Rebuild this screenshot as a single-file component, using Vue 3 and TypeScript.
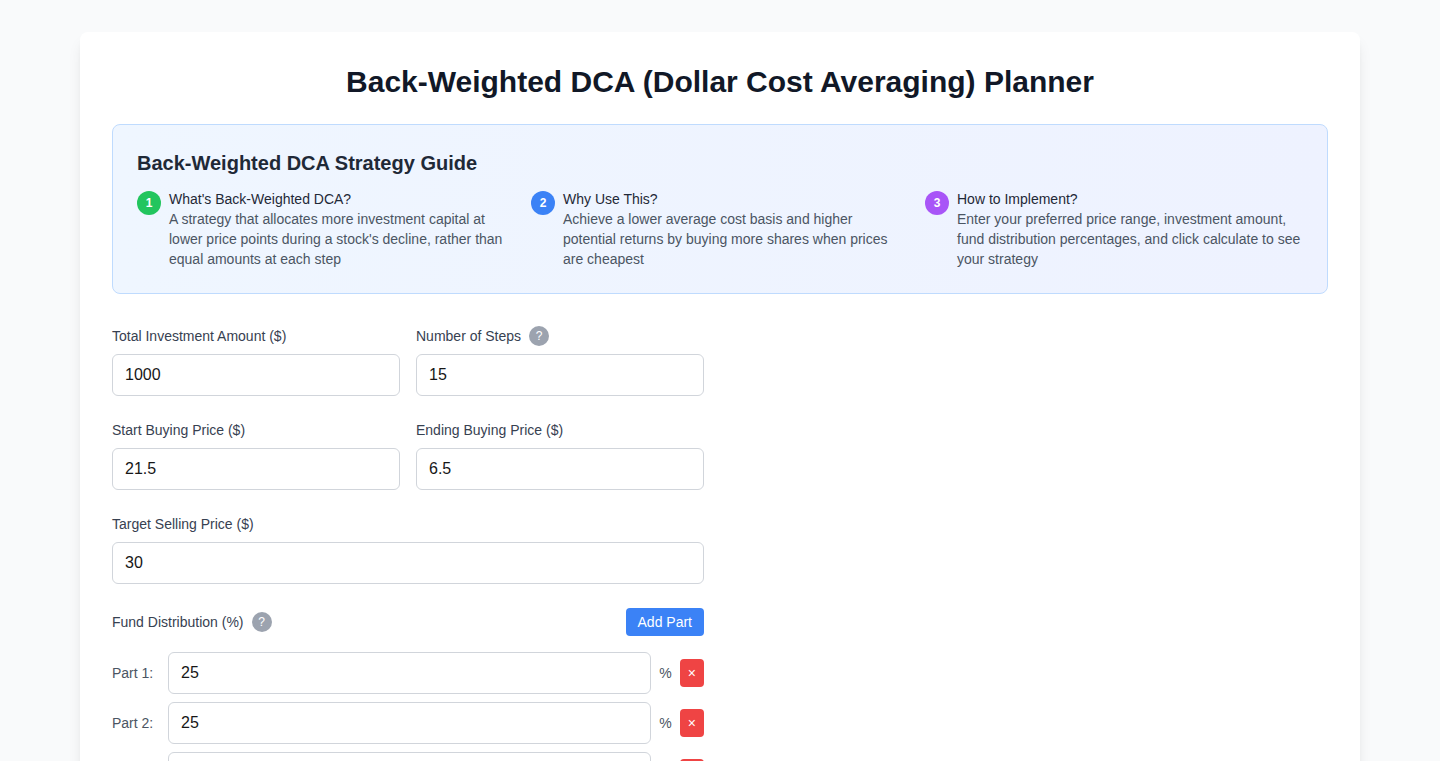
<script setup lang="ts">
import { ref } from 'vue'

interface GuideStep {
  title: string
  text: string
  tone: string
}

const guide: GuideStep[] = [
  {
    title: "What's Back-Weighted DCA?",
    text: "A strategy that allocates more investment capital at lower price points during a stock's decline, rather than equal amounts at each step",
    tone: 'green',
  },
  {
    title: 'Why Use This?',
    text: 'Achieve a lower average cost basis and higher potential returns by buying more shares when prices are cheapest',
    tone: 'blue',
  },
  {
    title: 'How to Implement?',
    text: 'Enter your preferred price range, investment amount, fund distribution percentages, and click calculate to see your strategy',
    tone: 'purple',
  },
]

const total = ref(1000)
const steps = ref(15)
const startPrice = ref(21.5)
const endPrice = ref(6.5)
const target = ref(30)
const parts = ref<number[]>([25, 25, 25, 25])

function addPart(): void {
  parts.value.push(0)
}

function removePart(index: number): void {
  parts.value.splice(index, 1)
}
</script>

<template>
  <div class="page">
    <main class="card">
      <h1>Back-Weighted DCA (Dollar Cost Averaging) Planner</h1>

      <section class="guide">
        <h2>Back-Weighted DCA Strategy Guide</h2>
        <div class="guide-grid">
          <div v-for="(item, i) in guide" :key="item.title" class="guide-item">
            <span class="badge" :class="item.tone">{{ i + 1 }}</span>
            <div>
              <h3>{{ item.title }}</h3>
              <p>{{ item.text }}</p>
            </div>
          </div>
        </div>
      </section>

      <div class="columns">
        <form class="form" @submit.prevent>
          <div class="pair">
            <div>
              <div class="label-row"><label for="total">Total Investment Amount ($)</label></div>
              <input id="total" v-model="total" type="number" />
            </div>
            <div>
              <div class="label-row">
                <label for="steps">Number of Steps</label>
                <button type="button" class="help" aria-label="About number of steps">?</button>
              </div>
              <input id="steps" v-model="steps" type="number" />
            </div>
          </div>

          <div class="pair">
            <div>
              <div class="label-row"><label for="start">Start Buying Price ($)</label></div>
              <input id="start" v-model="startPrice" type="number" step="any" />
            </div>
            <div>
              <div class="label-row"><label for="end">Ending Buying Price ($)</label></div>
              <input id="end" v-model="endPrice" type="number" step="any" />
            </div>
          </div>

          <div>
            <div class="label-row"><label for="target">Target Selling Price ($)</label></div>
            <input id="target" v-model="target" type="number" />
          </div>

          <fieldset aria-labelledby="distribution">
            <div class="dist-head">
              <div class="dist-title">
                <span id="distribution">Fund Distribution (%)</span>
                <button type="button" class="help" aria-label="About fund distribution">?</button>
              </div>
              <button type="button" class="add" @click="addPart">Add Part</button>
            </div>
            <div class="parts">
              <div v-for="(_, i) in parts" :key="i" class="part">
                <label :for="`part-${i}`">Part {{ i + 1 }}:</label>
                <input :id="`part-${i}`" v-model="parts[i]" type="number" />
                <span>%</span>
                <button type="button" class="remove" :aria-label="`Remove part ${i + 1}`" @click="removePart(i)">×</button>
              </div>
            </div>
          </fieldset>
        </form>
      </div>
    </main>
  </div>
</template>

<style>
body {
  background: #f9fafb;
}
html {
  scrollbar-width: none;
}
</style>

<style scoped>
* {
  box-sizing: border-box;
}
.page {
  min-height: 100vh;
  padding: 32px 16px;
  background: #f9fafb;
  color: #111827;
  font-family: "Liberation Sans", Arial, sans-serif;
  font-size: 14px;
  line-height: 20px;
}
.card {
  max-width: 1280px;
  margin: 0 auto;
  padding: 32px;
  background: #fff;
  border-radius: 8px;
  box-shadow: 0 10px 15px -3px rgb(0 0 0 / 0.1), 0 4px 6px -4px rgb(0 0 0 / 0.1);
}
h1,
h2,
h3,
p {
  margin: 0;
}
h1 {
  margin-bottom: 24px;
  font-size: 30px;
  line-height: 36px;
  text-align: center;
}
.guide {
  margin-bottom: 32px;
  padding: 24px;
  border: 1px solid #bfdbfe;
  border-radius: 8px;
  background: linear-gradient(to right, #eff6ff, #eef2ff);
}
h2 {
  margin-bottom: 12px;
  color: #1f2937;
  font-size: 20px;
  line-height: 28px;
}
.guide-grid {
  display: grid;
  grid-template-columns: repeat(3, 1fr);
  gap: 16px;
}
.guide-item {
  display: flex;
  align-items: flex-start;
  gap: 8px;
}
.badge {
  display: flex;
  flex: none;
  align-items: center;
  justify-content: center;
  width: 24px;
  height: 24px;
  margin-top: 2px;
  border-radius: 50%;
  color: #fff;
  font-size: 12px;
  font-weight: 700;
}
.green {
  background: #22c55e;
}
.blue {
  background: #3b82f6;
}
.purple {
  background: #a855f7;
}
h3 {
  color: #1f2937;
  font-size: 14px;
  font-weight: 400;
}
p {
  color: #4b5563;
}
.columns {
  display: grid;
  grid-template-columns: 1fr 1fr;
  gap: 32px;
}
.form {
  display: grid;
  gap: 24px;
}
.pair {
  display: grid;
  grid-template-columns: 1fr 1fr;
  gap: 16px;
}
.label-row,
.dist-title {
  display: flex;
  align-items: center;
  gap: 8px;
  color: #374151;
}
.label-row {
  margin-bottom: 8px;
}
input {
  display: block;
  width: 100%;
  min-width: 0;
  height: 42px;
  padding: 8px 12px;
  border: 1px solid #d1d5db;
  border-radius: 6px;
  background: #fff;
  color: #171717;
  font: 16px/24px "Liberation Sans", Arial, sans-serif;
}
button {
  padding: 0;
  border: 0;
  font-family: inherit;
  cursor: pointer;
}
.help {
  width: 20px;
  height: 20px;
  border-radius: 50%;
  background: #9ca3af;
  color: #fff;
  font-size: 12px;
  line-height: 16px;
}
fieldset {
  min-width: 0;
  margin: 0;
  padding: 0;
  border: 0;
}
.dist-head {
  display: flex;
  align-items: center;
  justify-content: space-between;
  margin-bottom: 16px;
}
.add {
  padding: 4px 12px;
  border-radius: 4px;
  background: #3b82f6;
  color: #fff;
  font-size: 14px;
  line-height: 20px;
}
.parts {
  display: grid;
  gap: 8px;
}
.part {
  display: flex;
  align-items: center;
  gap: 8px;
  color: #4b5563;
}
.part label {
  flex: none;
  width: 48px;
}
.part input {
  flex: 1;
}
.remove {
  flex: none;
  padding: 4px 8px;
  border-radius: 4px;
  background: #ef4444;
  color: #fff;
  font-size: 14px;
  line-height: 20px;
}
</style>
